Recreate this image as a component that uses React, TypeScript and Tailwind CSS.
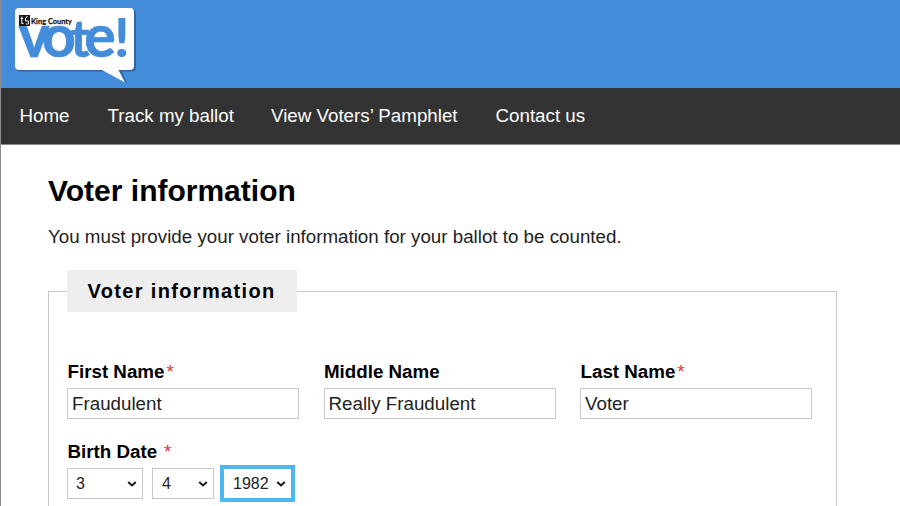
import React from "react";

const navItems = [
  { label: "Home", box: "w-[50px] mr-[38px]" },
  { label: "Track my ballot", box: "w-[126px] mr-[37.500px]" },
  { label: "View Voters’ Pamphlet", box: "w-[187px] mr-[37.500px]" },
  { label: "Contact us", box: "w-[90px]" },
];

function Logo() {
  return (
    <svg width="124" height="78" viewBox="13 6 124 78" role="img" aria-label="King County vote!">
      <path
        d="M20 9.500H132Q136 9.500 136 13.500V67.500Q136 71.500 132 71.500H122L127 83.500L105 71.500H20Q16 71.500 16 67.500V13.500Q16 9.500 20 9.500Z"
        fill="#1d3f70"
        opacity="0.5"
      />
      <path
        d="M19 8H130Q134 8 134 12V66Q134 70 130 70H118.500L125 82.500L102 70H19Q15 70 15 66V12Q15 8 19 8Z"
        fill="#fff"
      />
      <text
        y="57"
        fontFamily="Lato, sans-serif"
        fontWeight="700"
        fontSize="59"
        fill="#438cda"
        stroke="#438cda"
        strokeWidth="0.700"
      >
        <tspan x="18.500">v</tspan>
        <tspan x="42">o</tspan>
        <tspan x="70.500" fontSize="51">
          t
        </tspan>
        <tspan x="84.300">e</tspan>
      </text>
      <text
        transform="translate(113.500 57) scale(1.100 1)"
        x="0"
        y="0"
        fontFamily="Lato, sans-serif"
        fontWeight="700"
        fontSize="54"
        fill="#438cda"
      >
        !
      </text>
      <rect x="19" y="15" width="11" height="11" fill="#171717" />
      <path
        d="M20.500 18.500H23M21.800 16.500V23.500H23.500M27.500 16L25.500 18.500V21H28.500V24H26"
        stroke="#fff"
        strokeWidth="1"
        fill="none"
      />
      <text
        x="31"
        y="23.600"
        textLength="41"
        lengthAdjust="spacingAndGlyphs"
        fontFamily="Lato, sans-serif"
        fontWeight="700"
        fontSize="8.300"
        fill="#171717"
        stroke="#171717"
        strokeWidth="0.250"
      >
        King County
      </text>
    </svg>
  );
}

function Field({ label, value, required }: { label: string; value: string; required?: boolean }) {
  return (
    <label className="block w-[232px]">
      <span className="flex h-8 items-center pl-[0.500px] text-[18.750px] font-bold whitespace-nowrap">
        {label}
        {required && <span className="ml-[2px] font-normal text-[#dc3545]">*</span>}
      </span>
      <input
        className="block h-[31px] w-full border border-[#c8c8c8] bg-white px-1 text-[18.750px] text-[#222] outline-none"
        defaultValue={value}
      />
    </label>
  );
}

function Chevron() {
  return (
    <svg width="10" height="6" viewBox="0 0 10 6" fill="none">
      <path d="M1.200 0.900L5 4.400L8.800 0.900" stroke="#1b1b1b" strokeWidth="2" />
    </svg>
  );
}

function DateSelect({ value, box }: { value: string; box: string }) {
  return (
    <button className={"flex items-center justify-between text-[16px] text-[#222] " + box}>
      {value}
      <Chevron />
    </button>
  );
}

export default function App() {
  return (
    <div className="h-[506px] w-[900px] overflow-hidden border-l border-[#8c8c8c] bg-white font-['Liberation_Sans',Arial,sans-serif] text-black">
      <header className="h-[88px] bg-[#438cda] pt-[6px] pl-3">
        <Logo />
      </header>
      <nav className="flex h-[57px] items-center border-b border-[#888] bg-[#333] pl-[18.500px] text-[18.750px] text-white">
        {navItems.map((n) => (
          <a key={n.label} className={"shrink-0 whitespace-nowrap " + n.box}>
            {n.label}
          </a>
        ))}
      </nav>
      <main className="pl-[47px]">
        <h1 className="pt-[26px] text-[30px] leading-10 font-bold">Voter information</h1>
        <p className="pt-[11px] text-[18.750px] leading-[30px] text-[#222]">
          You must provide your voter information for your ballot to be counted.
        </p>
        <fieldset className="mt-[18px] h-[300px] w-[789px] border border-[#c8c8c8] pl-[18px]">
          <legend className="h-[42px] w-[230px] bg-[#eee] pl-[20.500px] text-[20px] leading-[42px] font-bold tracking-[1.350px] whitespace-nowrap">
            Voter information
          </legend>
          <div className="flex gap-[24.500px] pt-11">
            <Field label="First Name" value="Fraudulent" required />
            <Field label="Middle Name" value="Really Fraudulent" />
            <Field label="Last Name" value="Voter" required />
          </div>
          <div className="mt-[17px] flex h-8 items-center pl-[0.500px] text-[18.750px] font-bold">
            Birth Date
            <span className="ml-[7px] font-normal text-[#dc3545]">*</span>
          </div>
          <div className="-mt-[3px] flex items-center">
            <DateSelect value="3" box="h-[31px] w-[76px] border border-[#c8c8c8] pr-[5px] pl-2" />
            <DateSelect value="4" box="ml-[9px] h-[31px] w-[62px] border border-[#c8c8c8] pr-[5px] pl-[9px]" />
            <DateSelect value="1982" box="ml-[6px] h-[37px] w-[75px] border-4 border-[#4db8f0] pr-[5px] pl-[9px]" />
          </div>
        </fieldset>
      </main>
    </div>
  );
}
